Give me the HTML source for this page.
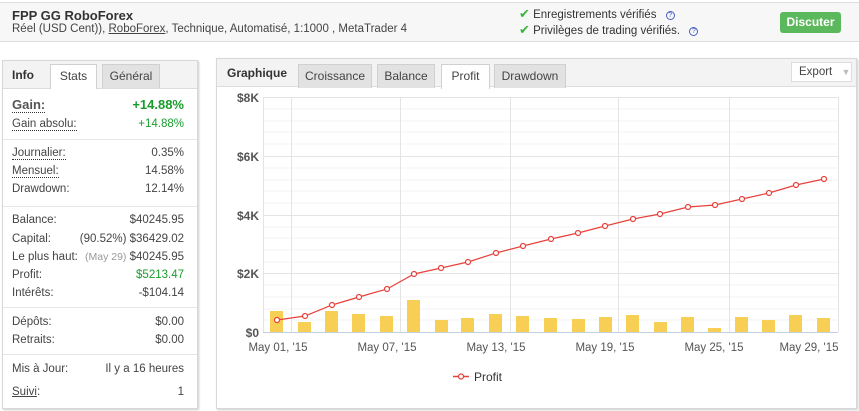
<!DOCTYPE html>
<html><head><meta charset="utf-8"><style>
*{margin:0;padding:0;box-sizing:border-box}
body{width:859px;height:411px;background:#fff;font-family:"Liberation Sans","DejaVu Sans",sans-serif;font-size:12px;color:#333;position:relative;overflow:hidden}
.a{position:absolute;white-space:nowrap}
.hdr{left:0;top:2px;width:859px;height:40px;background:#f7f7f7;border-top:1px solid #ddd;border-bottom:1px solid #ddd}
.panel{background:#fff;border:1px solid #d8d8d8;box-shadow:1px 1px 2px #ccc}
.tabbar{background:#f3f3f3;border-bottom:1px solid #ddd}
.tab{position:absolute;height:24px;line-height:23px;text-align:center;background:#e2e2e2;border:1px solid #d0d0d0;border-bottom:none;color:#444;font-size:12px}
.tab.on{background:#fff;height:25px}
.row{position:absolute;left:12px;width:172px;height:16px;font-size:11.5px;color:#444}
.row .r{position:absolute;right:0;top:0}
.dot{border-bottom:1px dotted #333}
.div{position:absolute;left:3px;width:194px;height:1px;background:#e6e6e6}
.q{display:inline-block;width:9px;height:9px;border:1px solid #4660c8;border-radius:50%;font-size:7px;line-height:7px;text-align:center;color:#4660c8;vertical-align:1px;margin-left:6px}
.chk{color:#3bb53b;font-size:13px;font-weight:bold}
</style></head><body>
<div class="a hdr"></div>
<div class="a" style="left:12px;top:8px;font-weight:bold;font-size:13px;color:#333">FPP GG RoboForex</div>
<div class="a" style="left:12px;top:23px;font-size:11.5px;color:#444">Réel (USD Cent)), <span style="text-decoration:underline">RoboForex</span>, Technique, Automatisé, 1:1000 , MetaTrader 4</div>
<div class="a" style="left:519px;top:6px;font-size:11.5px;color:#333"><span class="chk">✔</span> Enregistrements vérifiés <span class="q">?</span></div>
<div class="a" style="left:519px;top:22px;font-size:11.5px;color:#333"><span class="chk">✔</span> Privilèges de trading vérifiés. <span class="q">?</span></div>
<div class="a" style="left:780px;top:12px;width:61px;height:21px;background:#5cb85c;border-radius:3px;color:#fff;font-weight:bold;font-size:12px;text-align:center;line-height:21px">Discuter</div>

<!-- left panel -->
<div class="a panel" style="left:2px;top:60px;width:196px;height:349px"></div>
<div class="a tabbar" style="left:3px;top:61px;width:194px;height:28px"></div>
<div class="a" style="left:12px;top:68px;font-weight:bold;font-size:12px;color:#333">Info</div>
<div class="tab on" style="left:50px;top:64px;width:47px">Stats</div>
<div class="tab" style="left:102px;top:64px;width:58px">Général</div>

<div class="row" style="top:97px;font-size:13px;font-weight:bold;color:#555"><span class="dot">Gain:</span><span class="r" style="color:#1a9c2c">+14.88%</span></div>
<div class="row" style="top:118px"><span class="dot">Gain absolu:</span><span class="r" style="color:#1a9c2c">+14.88%</span></div>
<div class="div" style="top:139px"></div>
<div class="row" style="top:147px"><span class="dot">Journalier:</span><span class="r">0.35%</span></div>
<div class="row" style="top:165px"><span class="dot">Mensuel:</span><span class="r">14.58%</span></div>
<div class="row" style="top:183px">Drawdown:<span class="r">12.14%</span></div>
<div class="div" style="top:206px"></div>
<div class="row" style="top:214px">Balance:<span class="r">$40245.95</span></div>
<div class="row" style="top:233px">Capital:<span class="r">(90.52%) $36429.02</span></div>
<div class="row" style="top:251px">Le plus haut:<span class="r"><span style="color:#999;font-size:10.5px">(May 29)</span> $40245.95</span></div>
<div class="row" style="top:269px">Profit:<span class="r" style="color:#1a9c2c">$5213.47</span></div>
<div class="row" style="top:287px">Intérêts:<span class="r">-$104.14</span></div>
<div class="div" style="top:307px"></div>
<div class="row" style="top:316px">Dépôts:<span class="r">$0.00</span></div>
<div class="row" style="top:334px">Retraits:<span class="r">$0.00</span></div>
<div class="div" style="top:354px"></div>
<div class="row" style="top:363px">Mis à Jour:<span class="r">Il y a 16 heures</span></div>
<div class="row" style="top:386px"><span style="text-decoration:underline">Suivi</span>:<span class="r">1</span></div>

<!-- right panel -->
<div class="a panel" style="left:216px;top:58px;width:641px;height:351px"></div>
<div class="a tabbar" style="left:217px;top:59px;width:639px;height:28px"></div>
<div class="a" style="left:227px;top:66px;font-weight:bold;font-size:12px;color:#333">Graphique</div>
<div class="tab" style="left:298px;top:64px;width:74px">Croissance</div>
<div class="tab" style="left:377px;top:64px;width:58px">Balance</div>
<div class="tab on" style="left:441px;top:64px;width:49px">Profit</div>
<div class="tab" style="left:494px;top:64px;width:72px">Drawdown</div>
<div class="a" style="left:791px;top:62px;width:61px;height:20px;background:#fff;border:1px solid #ddd;font-size:11.5px;line-height:18px;padding-left:7px;color:#444">Export <span style="color:#bbb;font-size:9px;margin-left:6px">▼</span></div>

<svg class="a" style="left:0;top:0" width="859" height="411" font-family="Liberation Sans, sans-serif">
<g stroke="#f3f3f3" stroke-width="1">
<line x1="263" x2="838" y1="109" y2="109"/><line x1="263" x2="838" y1="121" y2="121"/><line x1="263" x2="838" y1="132" y2="132"/><line x1="263" x2="838" y1="144" y2="144"/>
<line x1="263" x2="838" y1="168" y2="168"/><line x1="263" x2="838" y1="180" y2="180"/><line x1="263" x2="838" y1="191" y2="191"/><line x1="263" x2="838" y1="203" y2="203"/>
<line x1="263" x2="838" y1="227" y2="227"/><line x1="263" x2="838" y1="238" y2="238"/><line x1="263" x2="838" y1="250" y2="250"/><line x1="263" x2="838" y1="262" y2="262"/>
<line x1="263" x2="838" y1="285" y2="285"/><line x1="263" x2="838" y1="297" y2="297"/><line x1="263" x2="838" y1="309" y2="309"/><line x1="263" x2="838" y1="320" y2="320"/>
</g>
<g stroke="#e4e4e4" stroke-width="1">
<line x1="263" x2="838" y1="97.5" y2="97.5"/><line x1="263" x2="838" y1="156.5" y2="156.5"/><line x1="263" x2="838" y1="215.5" y2="215.5"/><line x1="263" x2="838" y1="273.5" y2="273.5"/>
<line x1="291.5" x2="291.5" y1="97" y2="332"/><line x1="400.5" x2="400.5" y1="97" y2="332"/><line x1="510.5" x2="510.5" y1="97" y2="332"/><line x1="618.5" x2="618.5" y1="97" y2="332"/><line x1="729.5" x2="729.5" y1="97" y2="332"/>
<line x1="263.5" x2="263.5" y1="97" y2="332"/><line x1="838.5" x2="838.5" y1="97" y2="332"/>
</g>
<g fill="#f7cf55">
<rect x="270" y="311" width="13" height="21"/><rect x="298" y="322" width="13" height="10"/><rect x="325" y="311" width="13" height="21"/><rect x="352" y="314" width="13" height="18"/><rect x="380" y="316" width="13" height="16"/><rect x="407" y="300" width="13" height="32"/><rect x="435" y="320" width="13" height="12"/><rect x="461" y="318" width="13" height="14"/><rect x="489" y="314" width="13" height="18"/><rect x="516" y="316" width="13" height="16"/>
<rect x="544" y="318" width="13" height="14"/><rect x="572" y="319" width="13" height="13"/><rect x="599" y="317" width="13" height="15"/><rect x="626" y="315" width="13" height="17"/><rect x="654" y="322" width="13" height="10"/><rect x="681" y="317" width="13" height="15"/><rect x="708" y="328" width="13" height="4"/><rect x="735" y="317" width="13" height="15"/><rect x="762" y="320" width="13" height="12"/><rect x="789" y="315" width="13" height="17"/><rect x="817" y="318" width="13" height="14"/>
</g>
<line x1="263" x2="838" y1="332.5" y2="332.5" stroke="#c0d0e0"/>
<g fill="none" stroke="#e8413c" stroke-width="1.2">
<polyline points="277,320 305,316 332,305 359,297 387,289 414,274 441,268 468,262 496,253 523,246 551,239 578,233 605,226 633,219 660,214 688,207 715,205 742,199 769,193 796,185 824,179"/>
</g>
<g fill="#fff" stroke="#e8413c" stroke-width="1.2">
<circle cx="277" cy="320" r="2.5"/><circle cx="305" cy="316" r="2.5"/><circle cx="332" cy="305" r="2.5"/><circle cx="359" cy="297" r="2.5"/><circle cx="387" cy="289" r="2.5"/><circle cx="414" cy="274" r="2.5"/><circle cx="441" cy="268" r="2.5"/><circle cx="468" cy="262" r="2.5"/><circle cx="496" cy="253" r="2.5"/><circle cx="523" cy="246" r="2.5"/><circle cx="551" cy="239" r="2.5"/><circle cx="578" cy="233" r="2.5"/><circle cx="605" cy="226" r="2.5"/><circle cx="633" cy="219" r="2.5"/><circle cx="660" cy="214" r="2.5"/><circle cx="688" cy="207" r="2.5"/><circle cx="715" cy="205" r="2.5"/><circle cx="742" cy="199" r="2.5"/><circle cx="769" cy="193" r="2.5"/><circle cx="796" cy="185" r="2.5"/><circle cx="824" cy="179" r="2.5"/>
</g>
<g font-size="12" fill="#555" text-anchor="end" font-weight="bold">
<text x="259" y="102">$8K</text><text x="259" y="161">$6K</text><text x="259" y="220">$4K</text><text x="259" y="278">$2K</text><text x="259" y="337">$0</text>
</g>
<g font-size="11.5" fill="#555" text-anchor="middle">
<text x="278" y="351">May 01, '15</text><text x="387" y="351">May 07, '15</text><text x="496" y="351">May 13, '15</text><text x="605" y="351">May 19, '15</text><text x="714" y="351">May 25, '15</text><text x="809" y="351">May 29, '15</text>
</g>
<line x1="453" x2="469" y1="376.5" y2="376.5" stroke="#e8413c" stroke-width="1.5"/>
<circle cx="461" cy="376.5" r="2.5" fill="#fff" stroke="#e8413c" stroke-width="1.2"/>
<text x="474" y="381" font-size="12" fill="#333">Profit</text>
</svg>
</body></html>
